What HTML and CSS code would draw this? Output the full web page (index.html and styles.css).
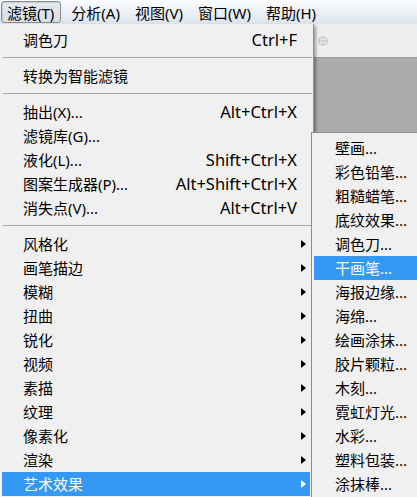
FILE: index.html
```html
<!DOCTYPE html>
<html lang="zh-CN">
<head>
<meta charset="utf-8">
<link rel="stylesheet" href="styles.css">
</head>
<body>
<div class="menubar">
  <div class="mb-item pressed">滤镜(T)</div>
  <div class="mb-item">分析(A)</div>
  <div class="mb-item">视图(V)</div>
  <div class="mb-item">窗口(W)</div>
  <div class="mb-item">帮助(H)</div>
</div>
<div class="workspace">
  <div class="optbar">
    <svg class="opt-icon" width="10" height="14" viewBox="0 0 10 14"><circle cx="5" cy="7" r="4" fill="none" stroke="#c4c4c4" stroke-width="1.5"/><path d="M5 4v6M2 7h6" stroke="#c4c4c4" stroke-width="1"/></svg>
  </div>
  <div class="canvas"></div>

  <div class="menu main-menu">
    <div class="row"><span class="label">调色刀</span><span class="key">Ctrl+F</span><span class="arr"></span></div>
    <div class="sep"></div>
    <div class="row"><span class="label">转换为智能滤镜</span><span class="key"></span><span class="arr"></span></div>
    <div class="sep"></div>
    <div class="row"><span class="label">抽出(X)...</span><span class="key">Alt+Ctrl+X</span><span class="arr"></span></div>
    <div class="row"><span class="label">滤镜库(G)...</span><span class="key"></span><span class="arr"></span></div>
    <div class="row"><span class="label">液化(L)...</span><span class="key">Shift+Ctrl+X</span><span class="arr"></span></div>
    <div class="row"><span class="label">图案生成器(P)...</span><span class="key">Alt+Shift+Ctrl+X</span><span class="arr"></span></div>
    <div class="row"><span class="label">消失点(V)...</span><span class="key">Alt+Ctrl+V</span><span class="arr"></span></div>
    <div class="sep"></div>
    <div class="row"><span class="label">风格化</span><span class="key"></span><span class="arr tri"></span></div>
    <div class="row"><span class="label">画笔描边</span><span class="key"></span><span class="arr tri"></span></div>
    <div class="row"><span class="label">模糊</span><span class="key"></span><span class="arr tri"></span></div>
    <div class="row"><span class="label">扭曲</span><span class="key"></span><span class="arr tri"></span></div>
    <div class="row"><span class="label">锐化</span><span class="key"></span><span class="arr tri"></span></div>
    <div class="row"><span class="label">视频</span><span class="key"></span><span class="arr tri"></span></div>
    <div class="row"><span class="label">素描</span><span class="key"></span><span class="arr tri"></span></div>
    <div class="row"><span class="label">纹理</span><span class="key"></span><span class="arr tri"></span></div>
    <div class="row"><span class="label">像素化</span><span class="key"></span><span class="arr tri"></span></div>
    <div class="row"><span class="label">渲染</span><span class="key"></span><span class="arr tri"></span></div>
    <div class="row active"><span class="label">艺术效果</span><span class="key"></span><span class="arr tri"></span></div>
  </div>

  <div class="menu sub-menu">
    <div class="row"><span class="label">壁画...</span></div>
    <div class="row"><span class="label">彩色铅笔...</span></div>
    <div class="row"><span class="label">粗糙蜡笔...</span></div>
    <div class="row"><span class="label">底纹效果...</span></div>
    <div class="row"><span class="label">调色刀...</span></div>
    <div class="row active"><span class="label">干画笔...</span></div>
    <div class="row"><span class="label">海报边缘...</span></div>
    <div class="row"><span class="label">海绵...</span></div>
    <div class="row"><span class="label">绘画涂抹...</span></div>
    <div class="row"><span class="label">胶片颗粒...</span></div>
    <div class="row"><span class="label">木刻...</span></div>
    <div class="row"><span class="label">霓虹灯光...</span></div>
    <div class="row"><span class="label">水彩...</span></div>
    <div class="row"><span class="label">塑料包装...</span></div>
    <div class="row"><span class="label">涂抹棒...</span></div>
  </div>
</div>
</body>
</html>
```

FILE: styles.css
```css
html, body {
  margin: 0;
  padding: 0;
  width: 417px;
  height: 497px;
  overflow: hidden;
  background: #ababab;
  font-family: "Noto Sans", "Noto Sans CJK SC", sans-serif;
  font-size: 15px;
  color: #000;
}

.menubar {
  height: 24px;
  display: flex;
  align-items: stretch;
  background: linear-gradient(#fbfcfd, #e9eef5 60%, #dbe3ee);
  box-sizing: border-box;
  padding: 1px 0 1px 1px;
}

.mb-item {
  line-height: 22px;
  padding: 0 6px;
  margin-right: 1px;
  white-space: nowrap;
  border: 1px solid transparent;
  box-sizing: border-box;
}

.mb-item.pressed {
  border-color: #8a8c8f;
  border-radius: 3px;
  padding: 0 6px 0 5px;
  background: linear-gradient(#e6eaef, #d9dfe6);
  box-shadow: inset 1px 1px 1px rgba(0,0,0,0.12);
  margin-right: 3px;
}

.workspace {
  position: relative;
  height: 473px;
  display: flex;
  flex-direction: column;
}

.optbar {
  height: 33px;
  background: #efefef;
  border-bottom: 1px solid #9c9c9c;
  flex: none;
  position: relative;
}

.opt-icon {
  position: absolute;
  left: 318px;
  top: 10px;
}

.canvas {
  flex: 1;
  background: #ababab;
}

.menu {
  position: absolute;
  background: #f0f0f0;
  box-sizing: border-box;
}

.main-menu {
  top: 0;
  left: 0;
  width: 314px;
  height: 480px;
  padding-top: 4px;
  border-right: 1px solid #8f8f8f;
  box-shadow: 2px 2px 3px rgba(0,0,0,0.35);
}

.sub-menu {
  top: 108px;
  left: 311px;
  width: 150px;
  height: 400px;
  padding-top: 3px;
  border: 1px solid #8f8f8f;
}

.row {
  height: 24px;
  line-height: 24px;
  display: flex;
  align-items: center;
  white-space: nowrap;
}

.main-menu .row {
  padding: 0 7px 0 23px;
}

.sub-menu .row {
  padding-left: 23px;
}

.label {
  flex: 1;
}

.key {
  flex: none;
  font-size: 16.5px;
}

.arr {
  flex: none;
  width: 9px;
  height: 9px;
  display: flex;
  justify-content: flex-end;
  align-items: center;
}

.arr.tri::after {
  content: "";
  width: 0;
  height: 0;
  border-left: 5px solid #000;
  border-top: 4px solid transparent;
  border-bottom: 4px solid transparent;
}

.sep {
  height: 1px;
  background: #a8a8a8;
  margin: 5px 1px 6px 3px;
}

.main-menu .row.active {
  background: #3399f3;
  color: #fff;
  margin: 0 3px 0 2px;
  padding-left: 21px;
  padding-right: 4px;
}

.main-menu .row.active .arr.tri::after {
  border-left-color: #fff;
}

.sub-menu .row.active {
  background: #3399f3;
  color: #fff;
  margin-left: 2px;
  padding-left: 21px;
}
```
